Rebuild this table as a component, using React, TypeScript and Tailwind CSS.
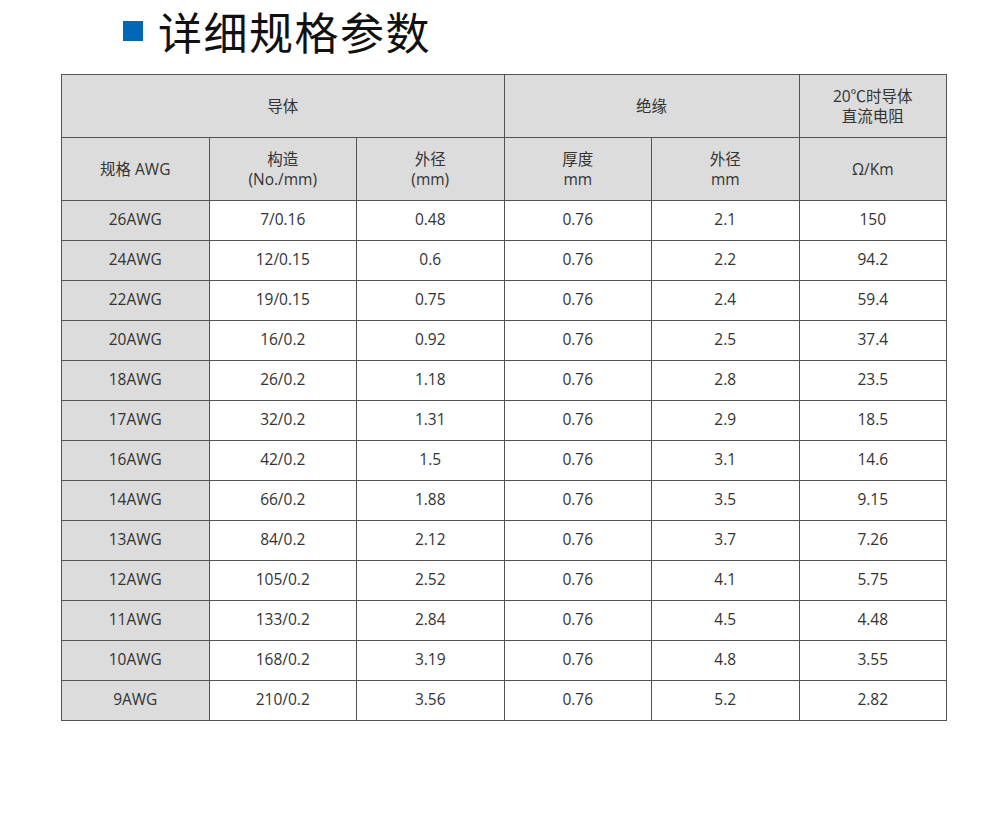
const rows = [
  ["26AWG", "7/0.16", "0.48", "0.76", "2.1", "150"],
  ["24AWG", "12/0.15", "0.6", "0.76", "2.2", "94.2"],
  ["22AWG", "19/0.15", "0.75", "0.76", "2.4", "59.4"],
  ["20AWG", "16/0.2", "0.92", "0.76", "2.5", "37.4"],
  ["18AWG", "26/0.2", "1.18", "0.76", "2.8", "23.5"],
  ["17AWG", "32/0.2", "1.31", "0.76", "2.9", "18.5"],
  ["16AWG", "42/0.2", "1.5", "0.76", "3.1", "14.6"],
  ["14AWG", "66/0.2", "1.88", "0.76", "3.5", "9.15"],
  ["13AWG", "84/0.2", "2.12", "0.76", "3.7", "7.26"],
  ["12AWG", "105/0.2", "2.52", "0.76", "4.1", "5.75"],
  ["11AWG", "133/0.2", "2.84", "0.76", "4.5", "4.48"],
  ["10AWG", "168/0.2", "3.19", "0.76", "4.8", "3.55"],
  ["9AWG", "210/0.2", "3.56", "0.76", "5.2", "2.82"],
];

const cell = "border-[1.5px] border-[#555251] text-center align-middle p-0";

export default function App() {
  return (
    <div
      className="w-[990px] h-[830px] bg-white text-[#333]"
      style={{ fontFamily: '"Open Sans", "Noto Sans CJK SC", sans-serif' }}
    >
      <div className="flex items-center pl-[123px] pt-[0px] h-[62px]">
        <div className="w-[20px] h-[20px] bg-[#0068b7]" />
        <h1
          className="ml-[15px] text-[44px] leading-none text-[#111] tracking-[1.5px]"
          style={{ fontFamily: '"Noto Sans CJK SC", sans-serif' }}
        >
          详细规格参数
        </h1>
      </div>

      <div className="pl-[61px] pt-[12px]">
        <table className="w-[886px] table-fixed border-collapse text-[15.5px] leading-[20px]">
          <tbody>
            <tr className="h-[63px] bg-[#dcdcdc]">
              <td colSpan={3} className={cell}>导体</td>
              <td colSpan={2} className={cell}>绝缘</td>
              <td className={cell}>
                20℃时导体
                <br />
                直流电阻
              </td>
            </tr>
            <tr className="h-[63px] bg-[#dcdcdc]">
              <td className={cell}>规格 AWG</td>
              <td className={cell}>
                构造
                <br />
                (No./mm)
              </td>
              <td className={cell}>
                外径
                <br />
                (mm)
              </td>
              <td className={cell}>
                厚度
                <br />
                mm
              </td>
              <td className={cell}>
                外径
                <br />
                mm
              </td>
              <td className={cell}>Ω/Km</td>
            </tr>
            {rows.map((r) => (
              <tr key={r[0]} className="h-[40px]">
                {r.map((v, i) => (
                  <td key={i} className={`${cell} ${i === 0 ? "bg-[#dcdcdc]" : "bg-white"}`}>
                    <span className="relative top-[-2px]">{v}</span>
                  </td>
                ))}
              </tr>
            ))}
          </tbody>
        </table>
      </div>
    </div>
  );
}
